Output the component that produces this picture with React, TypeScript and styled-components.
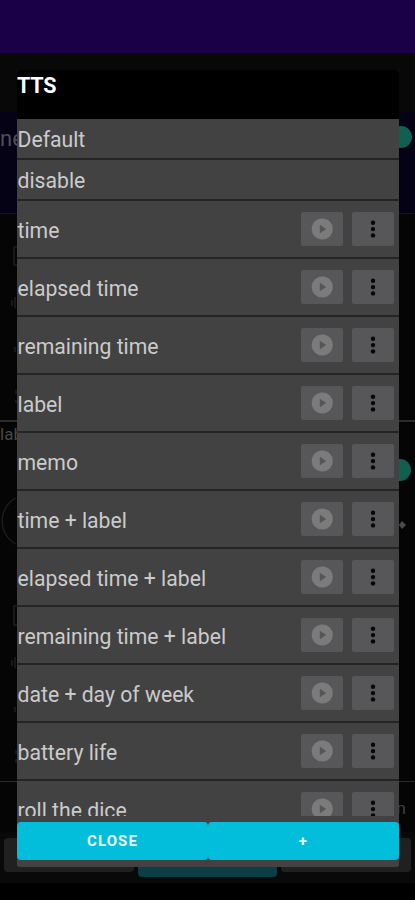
import React from "react";
import styled, { createGlobalStyle } from "styled-components";

const GlobalStyle = createGlobalStyle`
  *, *::before, *::after { box-sizing: border-box; }
  body { margin: 0; background: #000; font-family: Roboto, sans-serif; }
  button { font-family: inherit; border: 0; padding: 0; }
`;

const Screen = styled.div`
  position: relative;
  width: 415px;
  height: 900px;
  overflow: hidden;
  background: #000;
`;

const Page = styled.div`
  display: flex;
  flex-direction: column;
  height: 884px;
  background: #050505;
`;

const AppBar = styled.header`
  height: 53px;
  background: #190047;
`;

const Toolbar = styled.div`
  height: 59px;
  background: #080808;
`;

const ActiveTimer = styled.section`
  display: flex;
  justify-content: space-between;
  height: 101px;
  padding: 14px 3px 0 0;
  background: #040214;
`;

const TimerName = styled.span`
  font-size: 22px;
  line-height: 25px;
  color: #504f58;
`;

const Knob = styled.span`
  width: 22px;
  height: 22px;
  border-radius: 50%;
  background: #115f51;
`;

const TimerCard = styled.section<{ $height: number; $line: string; $thick?: number }>`
  display: flex;
  justify-content: space-between;
  height: ${(p) => p.$height}px;
  border-top: ${(p) => p.$thick ?? 1}px solid ${(p) => p.$line};
`;

const CardSide = styled.div`
  display: flex;
  flex-direction: column;
`;

const CardLabel = styled.span`
  width: 17px;
  height: 27px;
  overflow: hidden;
  padding-top: 3px;
  font-size: 17px;
  line-height: 18px;
  color: #484848;
`;

const RightSide = styled(CardSide)`
  align-items: flex-end;
  padding: 37px 4px 0 0;
`;

const Arrow = styled.svg`
  margin: 40px 5px 0 0;
`;

const FooterNote = styled.span`
  margin-left: auto;
  padding: 16px 9px 0 0;
  font-size: 17px;
  line-height: 20px;
  color: #404040;
`;

const BottomTabs = styled.div`
  display: flex;
  gap: 4px;
  height: 51px;
  padding: 6px 4px 0;
  background: #090909;
`;

const BottomTab = styled.div<{ $active?: boolean }>`
  flex: ${(p) => (p.$active ? "0 0 139px" : "1")};
  height: ${(p) => (p.$active ? 39 : 34)}px;
  border-radius: 4px;
  background: ${(p) => (p.$active ? "#0c3e46" : "#202020")};
`;

const Dialog = styled.div`
  position: absolute;
  left: 17px;
  top: 70px;
  width: 382px;
  height: 797px;
  display: flex;
  flex-direction: column;
  border-radius: 3px;
  overflow: hidden;
  background: #424242;
`;

const DialogTitle = styled.h1`
  flex: none;
  height: 49px;
  margin: 0;
  padding-top: 2px;
  background: #000;
  color: #fff;
  font-size: 21.5px;
  font-weight: 700;
  line-height: 27px;
  letter-spacing: -0.2px;
`;

const OptionList = styled.div`
  flex: none;
  height: 697px;
  overflow: hidden;
`;

const Option = styled.div<{ $height: number }>`
  display: flex;
  align-items: center;
  height: ${(p) => p.$height}px;
  padding-right: 5px;
  border-bottom: 2px solid #252525;
  color: #cbcbcb;
  font-size: 21.2px;
  line-height: 28px;
`;

const OptionLabel = styled.span`
  flex: 1;
  white-space: nowrap;
  padding: 3px 0 0 0.5px;
`;

const IconButton = styled.button`
  display: flex;
  width: 42px;
  height: 34px;
  margin-left: 9px;
  border-radius: 2px;
  background: #575759;
`;

const Actions = styled.div`
  display: flex;
  margin-top: 6px;
`;

const Action = styled.button`
  flex: 1;
  height: 38px;
  border-radius: 4px;
  background: #02bedb;
  color: #e9fbfd;
  font-size: 15px;
  font-weight: 700;
  letter-spacing: 1.1px;
`;

const PlayIcon = () => (
  <svg width="42" height="34" viewBox="0 0 42 34">
    <circle cx="21.3" cy="17" r="10.6" fill="#7b7b7c" />
    <path d="M18.8 12.8v8.4l6.4-4.2z" fill="#565658" />
  </svg>
);

const MoreIcon = () => (
  <svg width="42" height="34" viewBox="0 0 42 34" fill="#050505">
    <circle cx="21" cy="10.8" r="2.2" />
    <circle cx="21" cy="17.1" r="2.2" />
    <circle cx="21" cy="23.4" r="2.2" />
  </svg>
);

const UpperEdges = () => (
  <svg width="17" height="206" viewBox="0 0 17 206" fill="none" stroke="#1e1e1e" strokeWidth="1.5">
    <path d="M17 33h-3v18h3M12 86v6M15 83v11M15 133v5M16 176v4M16 186v3" />
  </svg>
);

const MiddleEdges = () => (
  <svg width="17" height="206" viewBox="0 0 17 206" fill="none" stroke="#202020">
    <path d="M17 49A26.5 26.5 0 0 0 17 95" strokeWidth="1.2" transform="translate(-1.5 0)" />
    <path d="M17 157h-3v19h3" strokeWidth="1.5" />
  </svg>
);

const LowerEdges = () => (
  <svg width="17" height="126" viewBox="0 0 17 126" fill="none" stroke="#1e1e1e" strokeWidth="1.5">
    <path d="M12 5v6M15 2v11M15 52v5M16 95v4M16 104v4" />
  </svg>
);

const phrases = [
  "time",
  "elapsed time",
  "remaining time",
  "label",
  "memo",
  "time + label",
  "elapsed time + label",
  "remaining time + label",
  "date + day of week",
  "battery life",
  "roll the dice",
];

export default function App() {
  return (
    <Screen>
      <GlobalStyle />
      <Page>
        <AppBar />
        <Toolbar />
        <ActiveTimer>
          <TimerName>ne</TimerName>
          <Knob />
        </ActiveTimer>
        <TimerCard $height={207} $line="#151517">
          <UpperEdges />
        </TimerCard>
        <TimerCard $height={361} $line="#2b2b2b" $thick={2}>
          <CardSide>
            <CardLabel>label</CardLabel>
            <MiddleEdges />
            <LowerEdges />
          </CardSide>
          <RightSide>
            <Knob />
            <Arrow width="7" height="8" viewBox="0 0 7 8">
              <path d="M3 0l4 4-4 4L0 4z" fill="#4b4b4b" />
            </Arrow>
          </RightSide>
        </TimerCard>
        <TimerCard $height={51} $line="#292929">
          <FooterNote>n</FooterNote>
        </TimerCard>
        <BottomTabs>
          <BottomTab />
          <BottomTab $active />
          <BottomTab />
        </BottomTabs>
      </Page>
      <Dialog role="dialog">
        <DialogTitle>TTS</DialogTitle>
        <OptionList>
          <Option $height={41}>
            <OptionLabel>Default</OptionLabel>
          </Option>
          <Option $height={41}>
            <OptionLabel>disable</OptionLabel>
          </Option>
          {phrases.map((phrase) => (
            <Option key={phrase} $height={58}>
              <OptionLabel>{phrase}</OptionLabel>
              <IconButton aria-label="Play">
                <PlayIcon />
              </IconButton>
              <IconButton aria-label="More">
                <MoreIcon />
              </IconButton>
            </Option>
          ))}
        </OptionList>
        <Actions>
          <Action>CLOSE</Action>
          <Action>+</Action>
        </Actions>
      </Dialog>
    </Screen>
  );
}
